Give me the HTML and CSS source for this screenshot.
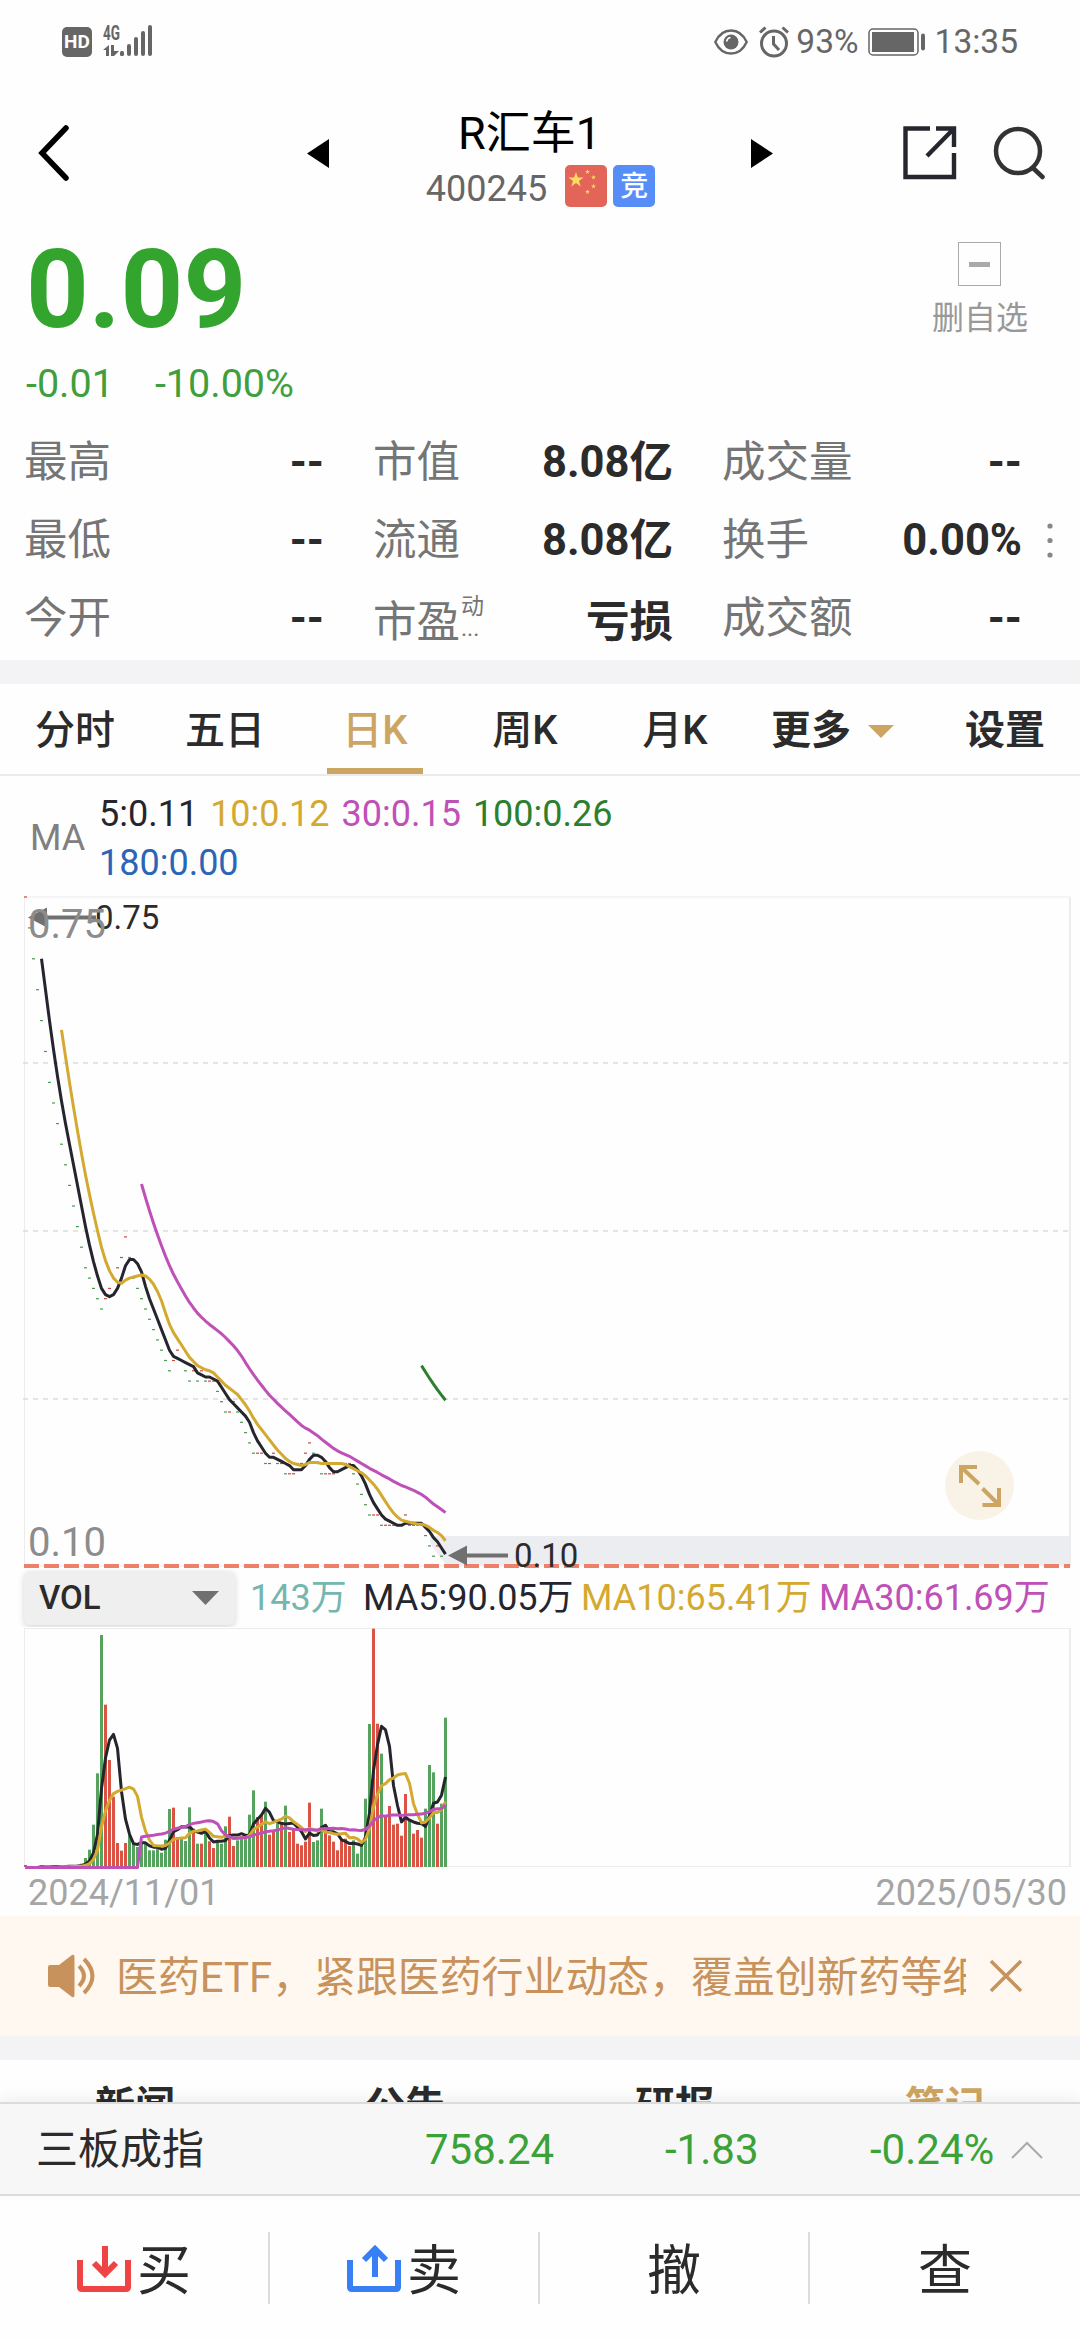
FILE: index.html
```html
<!DOCTYPE html>
<html lang="zh-CN">
<head>
  <meta charset="UTF-8">
  <meta name="viewport" content="width=device-width, initial-scale=1.0">
  <title>R汇车1 400245</title>
  <link rel="stylesheet" href="styles.css">
</head>

<body>
  <!-- Status bar -->
  <div class="status-bar">
    <div class="status-left">
      <span class="hd">HD</span>
      <svg width="52" height="34" viewBox="0 0 52 34" fill="#666">
        <text x="0" y="17" class="net-text" textLength="17" lengthAdjust="spacingAndGlyphs">4G</text>
        <path d="M0 27l6-5v11H3v-6zM8 22h3v11h-3zM11 33V28h5l-5 5z"/>
        <rect x="17" y="28" width="4" height="5" rx="1.5"/>
        <rect x="24" y="21" width="4" height="12" rx="2"/>
        <rect x="31" y="14" width="4" height="19" rx="2"/>
        <rect x="38" y="8" width="4" height="25" rx="2"/>
        <rect x="45" y="2" width="4" height="31" rx="2"/>
      </svg>
    </div>
    <div class="status-right">
      <svg class="eye" width="34" height="26" viewBox="0 0 34 26" fill="none" stroke="#666" stroke-width="2.4">
        <path d="M1.3 13C5 5 11 1.5 17 1.5S29 5 32.7 13C29 21 23 24.5 17 24.5S5 21 1.3 13z"/>
        <circle cx="17" cy="13" r="7.5" fill="#666" stroke="none"/>
        <path d="M12.5 12.5a5 5 0 0 1 4-4" stroke="#fff" stroke-width="1.6"/>
      </svg>
      <svg class="alarm" width="30" height="32" viewBox="0 0 30 32" fill="none" stroke="#666" stroke-width="3">
        <circle cx="15" cy="17.5" r="12.5"/>
        <path d="M14.5 10v8l5.5 6M1 6.5l5.5-5M29 6.5l-5.5-5"/>
      </svg>
      <span class="percent">93%</span>
      <svg class="battery" width="58" height="28" viewBox="0 0 58 28">
        <rect x="1" y="1" width="49" height="26" rx="4" fill="none" stroke="#666" stroke-width="1.5"/>
        <rect x="4" y="4" width="42" height="20" fill="#666"/>
        <rect x="53" y="5.5" width="4" height="17" rx="2" fill="#666"/>
      </svg>
      <span>13:35</span>
    </div>
  </div>

  <!-- Title bar -->
  <div class="header">
    <svg class="back" width="32" height="58" viewBox="0 0 32 58" fill="none" stroke="#000" stroke-width="5.5" stroke-linecap="round">
      <path d="M28 4L4 29l24 25"/>
    </svg>
    <svg class="prev" width="22" height="29" viewBox="0 0 22 29"><path d="M0 14.5L22 0v29z"/></svg>
    <div class="title">
      <div class="name">R汇车1</div>
      <div class="code">
        <span>400245</span>
        <svg width="42" height="42" viewBox="0 0 42 42">
          <rect width="42" height="42" rx="5" fill="#e36559"/>
          <g fill="#fbdc62">
            <path id="star" d="M11 7l1.9 5.5h5.7l-4.6 3.4 1.7 5.6-4.7-3.4-4.7 3.4 1.7-5.6-4.6-3.4h5.7z"/>
            <use href="#star" transform="translate(19 2) scale(.32)"/>
            <use href="#star" transform="translate(25 7.5) scale(.32)"/>
            <use href="#star" transform="translate(25 16.5) scale(.32)"/>
            <use href="#star" transform="translate(19 22) scale(.32)"/>
          </g>
        </svg>
        <span class="badge">竞</span>
      </div>
    </div>
    <svg class="next" width="22" height="29" viewBox="0 0 22 29"><path d="M22 14.5L0 0v29z"/></svg>
    <svg class="share" width="54" height="54" viewBox="0 0 54 54" fill="none" stroke="#26262f" stroke-width="4.4">
      <path d="M27 2.5H2.5v48.5H51V27M33 2.5h18V21M51 2.5L24 30"/>
    </svg>
    <svg class="search" width="54" height="54" viewBox="0 0 54 54" fill="none" stroke="#333" stroke-width="4.5">
      <circle cx="25" cy="25" r="22"/>
      <path d="M40 42l9.5 9" stroke-linecap="round"/>
    </svg>
  </div>

  <!-- Current price -->
  <div class="quote">
    <div>
      <div class="price">0.09</div>
      <div class="change"><span>-0.01</span><span>-10.00%</span></div>
    </div>
    <div class="fav">
      <div class="fav-box"></div>
      <div>删自选</div>
    </div>
  </div>

  <div class="stats">
    <span>最高</span><b>--</b>
    <span>市值</span><b>8.08亿</b>
    <span>成交量</span><b>--</b>
    <i></i>
    <span>最低</span><b>--</b>
    <span>流通</span><b>8.08亿</b>
    <span>换手</span><b>0.00%</b>
    <i><svg width="6" height="36" viewBox="0 0 6 36" fill="#888"><circle cx="3" cy="4" r="2.6"/><circle cx="3" cy="18.5" r="2.6"/><circle cx="3" cy="33" r="2.6"/></svg></i>
    <span>今开</span><b>--</b>
    <span class="pe">市盈<em><small>动</small><small>...</small></em></span><b class="pe">亏损</b>
    <span>成交额</span><b>--</b>
    <i></i>
  </div>

  <div class="divider"></div>

  <!-- Period tabs -->
  <div class="tabs">
    <div class="tab">分时</div>
    <div class="tab">五日</div>
    <div class="tab active"><span>日K</span></div>
    <div class="tab">周K</div>
    <div class="tab">月K</div>
    <div class="tab more">更多 <svg width="26" height="13" viewBox="0 0 26 13"><path d="M0 0h26L13 13z" fill="#cda562"/></svg></div>
    <div class="tab set">设置</div>
  </div>

  <div class="ma-row">
    <span class="ma-label">MA</span>
    <div class="ma-values">
      <div><span class="c5">5:0.11</span><span class="c10">10:0.12</span><span class="c30">30:0.15</span><span class="c100">100:0.26</span></div>
      <div><span class="c180">180:0.00</span></div>
    </div>
  </div>

  <!-- K line chart -->
  <div class="chart">
    <svg width="1080" height="673" viewBox="0 896 1080 673">
      <path d="M430 1536H1070V1565H446L430 1543z" fill="#ecedf1"/>
      <g class="frame">
        <path d="M24 897H1071M24.5 897V1566M24 1566H1071"/>
        <path d="M1070 897V1566" stroke-width="2"/>
      </g>
      <path class="grid" d="M23 1063H1069M23 1231H1069M23 1399H1069"/>
      <g id="candles"></g>
      <path class="base" d="M24 1566H1070"/>
      <g id="priceLines" class="lines"></g>
      <g fill="#707070">
        <path d="M28 917.5L47 907.5V927.5zM45 915.5H96V919.5H45z"/>
        <path d="M448 1555.5L467 1545.5V1565.5zM466 1553.5H508V1557.5H466z"/>
      </g>
      <g class="mark">
        <text x="95" y="929">0.75</text>
        <text x="514" y="1566.5">0.10</text>
      </g>
      <g class="axis">
        <text x="28" y="938">0.75</text>
        <text x="28" y="1555.5">0.10</text>
      </g>
    </svg>
    <div class="expand">
      <svg width="42" height="42" viewBox="0 0 42 42" fill="none" stroke="#cda562" stroke-width="4">
        <path d="M2 18V2H18M2 2L20 19M23.5 23.5L40 40M40 23V40H23.5"/>
      </svg>
    </div>
  </div>

  <div class="vol-row">
    <div class="vol-select">VOL <svg width="27" height="14" viewBox="0 0 27 14"><path d="M0 0h27L13.5 14z" fill="#707070"/></svg></div>
    <span class="vol-now">143万</span>
    <span class="vol5 c5">MA5:90.05万</span>
    <span class="vol10 c10">MA10:65.41万</span>
    <span class="c30">MA30:61.69万</span>
  </div>
  <svg class="vol-chart" width="1080" height="243" viewBox="0 1627 1080 243">
    <g class="frame">
      <path d="M24 1628.5H1071M24.5 1628V1867M24 1866.5H1071"/>
      <path d="M1070 1628V1867" stroke-width="2"/>
    </g>
    <g id="volumes"></g>
    <g id="volumeLines" class="lines"></g>
  </svg>
  <div class="dates"><span>2024/11/01</span><span>2025/05/30</span></div>

  <!-- Notice -->
  <div class="notice">
    <svg class="speaker" width="49" height="44" viewBox="0 0 49 44" fill="#c8925c">
      <path d="M2 11H11L24 1Q26.5 0 26.5 3V41Q26.5 44 24 43L11 33H2Q0 33 0 31V13Q0 11 2 11z"/>
      <path d="M31 12Q41 22 31 32M36 5Q53 22 36 39" fill="none" stroke="#c8925c" stroke-width="4"/>
    </svg>
    <div class="notice-text">医药ETF，紧跟医药行业动态，覆盖创新药等细分领域</div>
    <svg width="32" height="32" viewBox="0 0 32 32" stroke="#c8925c" stroke-width="3.4"><path d="M1 1l30 30M31 1L1 31"/></svg>
  </div>

  <div class="divider"></div>

  <div class="news-tabs">
    <div>新闻</div>
    <div>公告</div>
    <div>研报</div>
    <div class="on">笔记</div>
  </div>

  <!-- Index bar -->
  <div class="index-bar">
    <span class="index-name">三板成指</span>
    <span class="index-num">758.24</span>
    <span class="index-num diff">-1.83</span>
    <span class="index-num rate">-0.24%</span>
    <svg width="32" height="18" viewBox="0 0 32 18" fill="none" stroke="#aaa" stroke-width="2"><path d="M1 17L16 2l15 15"/></svg>
  </div>

  <!-- Bottom actions -->
  <div class="actions">
    <div>
      <svg width="54" height="48" viewBox="0 0 54 48" fill="none" stroke="#f04444" stroke-width="6">
        <path d="M3 15V42Q3 44 5 44H49Q51 44 51 42V15M28 1V29M17 18L28 29L39 18"/>
      </svg>买
    </div>
    <div>
      <svg width="54" height="52" viewBox="0 0 54 52" fill="none" stroke="#387ef5" stroke-width="6">
        <path d="M3 17V44Q3 46 5 46H49Q51 46 51 44V17M28 34V6M17 17L28 6L39 17"/>
      </svg>卖
    </div>
    <div>撤</div>
    <div>查</div>
  </div>

  <script src="chart.js"></script>
</body>
</html>
```
FILE: styles.css
```css
* {
  box-sizing: border-box;
}

body {
  margin: 0;
  width: 1080px;
  height: 2340px;
  overflow: hidden;
  background-color: #fefefe;
  color: #2b2b2b;
  font-family: Roboto, "Noto Sans CJK SC", sans-serif;
}

svg {
  display: block;
  flex: none;
}

/* Status bar */
.status-bar {
  display: flex;
  justify-content: space-between;
  height: 83px;
  padding: 0 62px;
  color: #666;
  font-size: 33.5px;
  line-height: 83px;
}

.status-left,
.status-right {
  display: flex;
  align-items: center;
}

.hd {
  width: 30px;
  height: 30px;
  margin-right: 11px;
  border-radius: 5px;
  background-color: #666;
  color: #fff;
  font-size: 19px;
  font-weight: bold;
  line-height: 30px;
  text-align: center;
}

.net-text {
  font-size: 21px;
  font-weight: bold;
}

.status-left svg {
  margin-top: -3px;
}

.eye {
  margin-right: 11px;
}

.alarm {
  margin-right: 7px;
}

.battery {
  margin: 0 9px;
}

/* Title bar */
.header {
  display: flex;
  align-items: center;
  height: 140px;
  padding-left: 38px;
}

.prev {
  margin-left: 237px;
}

.title {
  width: 422px;
  margin-top: 15px;
  text-align: center;
}

.name {
  padding-right: 21px;
  color: #000;
  font-size: 45px;
  line-height: 56px;
}

.code {
  display: flex;
  align-items: center;
  justify-content: center;
  height: 54px;
  padding-left: 1px;
  color: #666;
  font-size: 36px;
}

.code svg {
  margin: -5px 6px 0 18px;
}

.badge {
  width: 42px;
  height: 42px;
  margin-top: -5px;
  border-radius: 5px;
  background-color: #578df7;
  color: #fff;
  font-size: 28px;
  font-weight: 500;
  line-height: 43px;
}

.share {
  margin-left: 130px;
}

.search {
  margin-left: 36px;
}

/* Current price */
.quote {
  display: flex;
  justify-content: space-between;
  height: 200px;
  padding: 11px 52px 0 26px;
}

.price {
  color: #33a52f;
  font-size: 109.5px;
  font-weight: bold;
  line-height: 111px;
}

.change {
  display: flex;
  gap: 41px;
  margin-top: 12px;
  color: #3f9f3d;
  font-size: 39.5px;
  line-height: 54px;
}

.fav {
  padding-top: 8px;
  color: #999;
  font-size: 32px;
  line-height: 64px;
}

.fav-box {
  display: flex;
  align-items: center;
  justify-content: center;
  width: 43px;
  height: 44px;
  margin: 0 auto;
  border: 1px solid #aaa;
}

.fav-box::before {
  content: "";
  width: 21px;
  height: 5px;
  background-color: #aaa;
}

.stats {
  display: grid;
  grid-template-columns: 140px 160px 180px 169px 210px 139px 1fr;
  grid-auto-rows: 78px;
  height: 237px;
  padding-left: 24px;
  font-size: 43.5px;
  line-height: 79px;
  white-space: nowrap;
}

.stats > span {
  color: #757575;
}

.stats > span:nth-child(7n + 3),
.stats > span:nth-child(7n + 5) {
  padding-left: 49px;
}

.stats > b {
  text-align: right;
}

.stats > i {
  display: flex;
  align-items: center;
  padding-left: 25px;
}

.stats > .pe {
  display: flex;
  padding-top: 4px;
}

.stats > b.pe {
  justify-content: flex-end;
}

.pe em {
  display: flex;
  flex-direction: column;
  font-style: normal;
}

.pe small {
  height: 22px;
  margin-left: 1px;
  font-size: 23px;
  line-height: 48px;
}

.divider {
  height: 24px;
  background-color: #f3f3f5;
}

/* Period tabs */
.tabs {
  display: grid;
  grid-template-columns: 150px 150px 150px 150px 150px 210px 120px;
  height: 92px;
  border-bottom: 2px solid #ebebeb;
  font-size: 40px;
  font-weight: 500;
  line-height: 94px;
  text-align: center;
}

.tab.active {
  display: flex;
  justify-content: center;
  color: #cda562;
}

.tab.active span {
  width: 96px;
  height: 90px;
  border-bottom: 6px solid #cda562;
}

.tab.more {
  display: flex;
  align-items: center;
  padding-left: 21px;
  gap: 17px;
  font-weight: bold;
}

.tab.set {
  font-weight: bold;
  text-align: left;
  padding-left: 5px;
}

.ma-row {
  display: flex;
  align-items: center;
  height: 120px;
  padding: 5px 0 0 30px;
  font-size: 36px;
  line-height: 49px;
}

.ma-label {
  width: 69px;
  color: #808080;
}

.ma-values div {
  display: flex;
  gap: 12px;
}

.c5 { color: #25252e; }
.c10 { color: #d4a92f; }
.c30 { color: #bf50b8; }
.c100 { color: #2c7f2e; }
.c180 { color: #2b65b8; }

/* Charts */
.chart {
  position: relative;
  height: 673px;
}

.frame {
  fill: none;
  stroke: #ececec;
  stroke-width: 1;
}

.grid {
  stroke: #dcdcdc;
  stroke-width: 1.6;
  stroke-dasharray: 5 5;
}

.base {
  stroke: #ee8069;
  stroke-width: 4;
  stroke-dasharray: 15 5;
}

.lines {
  fill: none;
  stroke-width: 3;
  stroke-linejoin: round;
}

.mark {
  fill: #2b2b2b;
  font-size: 33px;
}

.axis {
  fill: #8c8c8c;
  font-size: 40px;
}

.expand {
  position: absolute;
  left: 945px;
  top: 555px;
  display: flex;
  align-items: center;
  justify-content: center;
  width: 69px;
  height: 69px;
  border-radius: 50%;
  background-color: #f9f2e6;
}

.vol-row {
  display: flex;
  align-items: center;
  height: 58px;
  padding-left: 24px;
  overflow: hidden;
  font-size: 36px;
  line-height: 58px;
  white-space: nowrap;
}

.vol-select {
  display: flex;
  align-items: center;
  justify-content: space-between;
  width: 211px;
  height: 54px;
  padding: 0 16px 0 15px;
  border-radius: 6px;
  background-color: #efefef;
  box-shadow: 0 2px 6px rgba(0, 0, 0, 0.16);
  font-size: 33px;
  font-weight: 500;
}

.vol-now {
  width: 113px;
  margin-left: 15px;
  color: #74b6b0;
}

.vol5 {
  width: 218px;
}

.vol10 {
  width: 238px;
}

.dates {
  display: flex;
  justify-content: space-between;
  height: 46px;
  padding: 0 13px 0 28px;
  color: #a5a5a5;
  font-size: 36px;
  line-height: 46px;
}

/* Notice */
.notice {
  display: flex;
  align-items: center;
  height: 120px;
  padding-left: 48px;
  background-color: #fff8f0;
  color: #c8925c;
  font-size: 41.9px;
  line-height: 120px;
}

.notice-text {
  width: 850px;
  margin: 4px 24px 0 19px;
  overflow: hidden;
  white-space: nowrap;
}

.news-tabs {
  display: grid;
  grid-template-columns: repeat(4, 1fr);
  height: 42px;
  overflow: hidden;
  font-size: 40px;
  font-weight: bold;
  line-height: 94px;
  text-align: center;
}

.news-tabs .on {
  color: #cda562;
}

/* Index bar */
.index-bar {
  position: relative;
  display: flex;
  align-items: center;
  height: 94px;
  padding: 2px 36px 0;
  border-top: 2px solid #dcdcdc;
  border-bottom: 2px solid #dcdcdc;
  background-color: #f7f7f7;
  box-shadow: 0 -4px 12px rgba(0, 0, 0, 0.06);
  font-size: 42px;
  line-height: 90px;
}

.index-name {
  width: 389px;
}

.index-num {
  width: 240px;
  color: #3ba238;
}

.index-num.diff {
  width: 205px;
}

.index-num.rate {
  width: 141px;
}

/* Bottom actions */
.actions {
  display: grid;
  grid-template-columns: repeat(4, 1fr);
  align-items: center;
  height: 144px;
}

.actions div {
  display: flex;
  align-items: center;
  justify-content: center;
  gap: 6px;
  height: 72px;
  padding-top: 8px;
  font-size: 54px;
  line-height: 64px;
}

.actions svg {
  margin-top: -6px;
}

.actions div:not(:last-child) {
  border-right: 2px solid #dcdcdc;
}
```
FILE: chart.js
```js
// closing price as cents below 0.75, one entry per day
const drops = [
  0, 3, 6, 9, 12, 15, 18, 20, 22, 24, 26, 28, 30, 32, 34, 36, 37, 38, 39, 40,
  39, 38, 37, 36, 35, 33, 35, 37, 38, 39, 40, 41, 42, 43, 44, 45, 46, 45, 44, 45,
  46, 47, 46, 47, 46, 47, 47, 47, 48, 49, 50, 50, 49, 50, 51, 52, 53, 54, 54, 54,
  55, 55, 54, 55, 55, 56, 56, 56, 55, 55, 54, 53, 54, 55, 56, 56, 56, 56, 55, 55,
  55, 55, 56, 57, 58, 59, 60, 60, 60, 61, 61, 61, 61, 61, 61, 60, 61, 61, 61, 61,
  62, 63, 64, 63, 64, 65
];

// negative volume = green bar
const volumes = [
  6, -1, -1, -2, -2, -2, -2, -3, -3, -3, -4, -4, -5, -6, -10, -27, -52, -127, -281, -696,
  487, 321, 211, 72, 49, 72, -95, -70, -60, -75, -70, -50, -50, -62, -43, -82, -174, 178, 90, -88,
  -78, -179, 115, -70, 70, -110, 77, 57, -80, -70, -122, 151, 63, -80, -92, -95, -157, -230, 150, 155,
  -196, 97, 105, -130, 135, -184, 105, 112, 70, 65, 76, 193, -75, -80, -175, 110, 95, 76, 50, 85,
  85, 63, -80, -40, -64, -205, -429, 715, 430, -340, 150, 183, 127, 130, 94, 219, -140, 100, 111, 88,
  -175, -306, -284, 130, -190, -448
];

const colors = { 5: "#25252e", 10: "#d4a92f", 30: "#bf50b8", 100: "#2c7f2e" };
const dayX = i => 25.5 + i * 4;
const priceY = d => 897 + d * 10.3;
const volumeY = v => 1867.5 - v / 3;

function average(data, i, n) {
  let sum = 0;
  for (let k = i - n + 1; k <= i; k++) sum += Math.abs(data[k]);
  return sum / n;
}

function drawLine(id, n, points) {
  document.getElementById(id).innerHTML +=
    `<polyline points="${points.join(" ")}" stroke="${colors[n]}"/>`;
}

let candles = "";
drops.forEach((d, i) => {
  const down = i > 0 && d > drops[i - 1];
  candles += `<rect x="${dayX(i) - 1.5}" y="${priceY(d) - 0.6}" width="3" height="1.2" fill="${down ? "#4b9a55" : "#cc4a3c"}"/>`;
});
document.getElementById("candles").innerHTML = candles;

[5, 10, 30, 100].forEach(n => {
  const points = [];
  for (let i = n - 1; i < drops.length; i++) {
    points.push(dayX(i) + "," + priceY(average(drops, i, n)));
  }
  drawLine("priceLines", n, points);
});

let bars = "";
volumes.forEach((v, i) => {
  const h = Math.abs(v) / 3;
  bars += `<rect x="${dayX(i) - 1.5}" y="${1867 - h}" width="3" height="${h}" fill="${v < 0 ? "#56a35f" : "#db5345"}"/>`;
});
document.getElementById("volumes").innerHTML = bars;

// the volume averages stay at zero until there are enough days
[5, 10, 30].forEach(n => {
  const points = volumes.map((v, i) =>
    dayX(i) + "," + volumeY(i < n - 1 ? 0 : average(volumes, i, n)));
  drawLine("volumeLines", n, points);
});
```
